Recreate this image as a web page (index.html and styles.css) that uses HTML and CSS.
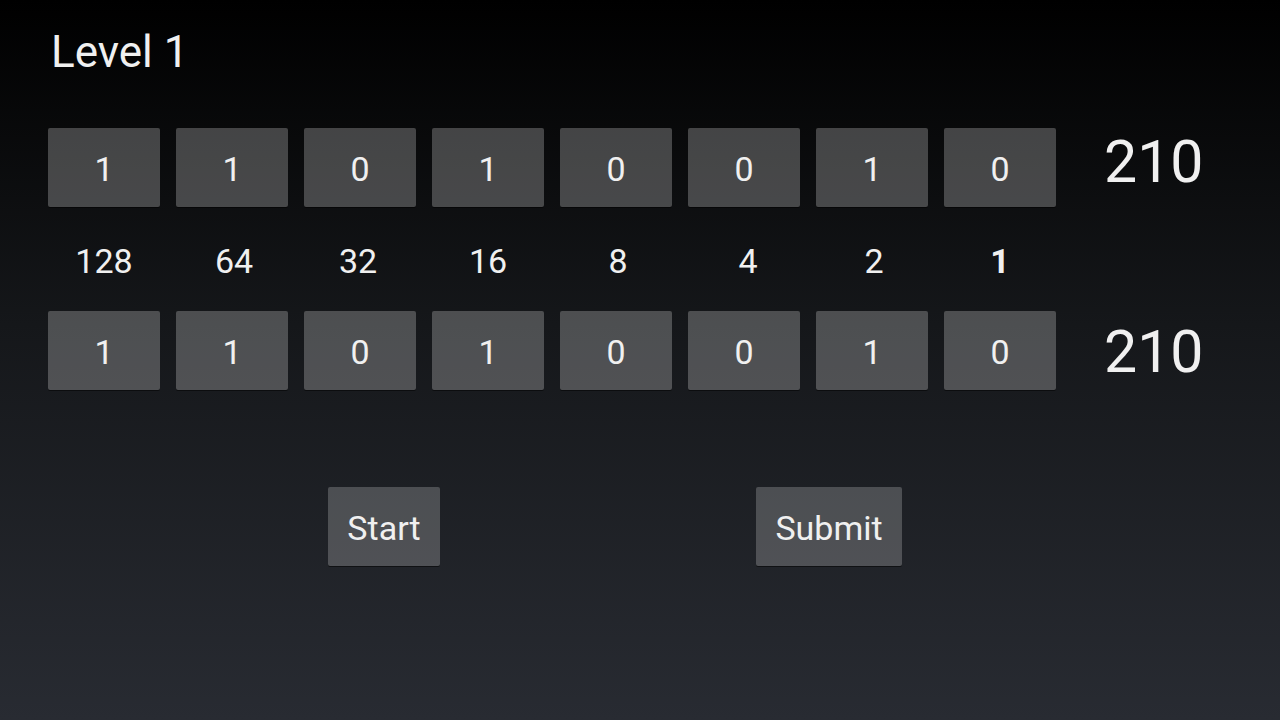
FILE: index.html
```html
<!DOCTYPE html>
<html>
<head>
<meta charset="utf-8">
<link rel="stylesheet" href="styles.css">
</head>
<body>
<div class="screen">
  <h1 class="title">Level 1</h1>
  <div class="row row-top">
    <div class="bits">
      <div class="bit">1</div><div class="bit">1</div><div class="bit">0</div><div class="bit">1</div>
      <div class="bit">0</div><div class="bit">0</div><div class="bit">1</div><div class="bit">0</div>
    </div>
    <div class="value">210</div>
  </div>
  <div class="weights">
    <span class="w">128</span><span class="w">64</span><span class="w">32</span><span class="w">16</span>
    <span class="w">8</span><span class="w">4</span><span class="w">2</span><span class="w w-bold">1</span>
  </div>
  <div class="row row-bottom">
    <div class="bits">
      <div class="bit">1</div><div class="bit">1</div><div class="bit">0</div><div class="bit">1</div>
      <div class="bit">0</div><div class="bit">0</div><div class="bit">1</div><div class="bit">0</div>
    </div>
    <div class="value">210</div>
  </div>
  <div class="actions">
    <button class="btn btn-start">Start</button>
    <button class="btn btn-submit">Submit</button>
  </div>
</div>
</body>
</html>
```
FILE: styles.css
```css
html, body {
  margin: 0;
  padding: 0;
  width: 1280px;
  height: 720px;
  overflow: hidden;
}
body {
  background: linear-gradient(to bottom, #000000 0%, #15171a 45%, #282b32 100%);
  font-family: Roboto, "Noto Sans", sans-serif;
  color: #f0f0f0;
}
.screen {
  padding: 0 0 0 48px;
  display: flex;
  flex-direction: column;
}
.title {
  margin: 28px 0 0 3px;
  font-size: 44px;
  font-weight: 400;
  line-height: 48px;
  height: 52px;
}
.row {
  display: flex;
  align-items: center;
}
.row-top { margin-top: 48px; }
.bits {
  display: flex;
  gap: 16px;
}
.bit {
  width: 112px;
  height: 79px;
  box-sizing: border-box;
  background: rgba(255, 255, 255, 0.245);
  border-radius: 2px;
  box-shadow: 0 1px 0 rgba(0, 0, 0, 0.5);
  display: flex;
  align-items: center;
  justify-content: center;
  font-size: 34px;
  padding-top: 2px;
}
.value {
  margin-left: 48px;
  font-size: 59px;
  line-height: 60px;
  margin-top: -12px;
}
.row-bottom .value { margin-top: 2px; }
.weights {
  display: flex;
  gap: 16px;
  height: 104px;
  align-items: center;
}
.w {
  width: 112px;
  box-sizing: border-box;
  text-align: center;
  font-size: 34px;
  padding-top: 3px;
}
.w:nth-child(2) { padding-left: 4px; }
.w:nth-child(3) { padding-right: 4px; }
.w:nth-child(5) { padding-left: 4px; }
.w:nth-child(6) { padding-left: 8px; }
.w:nth-child(7) { padding-left: 4px; }
.w-bold { font-weight: 700; }
.actions {
  display: flex;
  margin-top: 97px;
  padding-left: 280px;
}
.btn {
  height: 79px;
  background: rgba(255, 255, 255, 0.21);
  border: none;
  border-radius: 2px;
  box-shadow: 0 1px 0 rgba(0, 0, 0, 0.5);
  color: #f0f0f0;
  font-family: Roboto, "Noto Sans", sans-serif;
  font-size: 34px;
  padding: 2px 0 0 0;
}
.btn-start { width: 112px; }
.btn-submit { width: 146px; margin-left: 316px; }
```
